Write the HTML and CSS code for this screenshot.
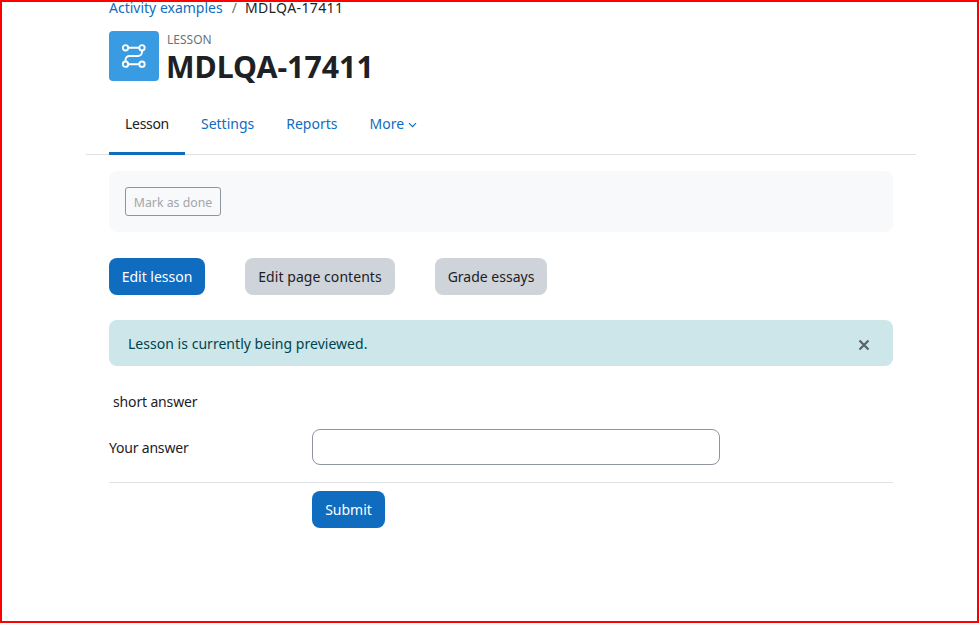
FILE: index.html
```html
<!DOCTYPE html>
<html lang="en">
<head>
<meta charset="utf-8">
<title>MDLQA-17411</title>
<link rel="stylesheet" href="styles.css">
</head>
<body>
<div class="frame">
  <div class="wrap">
    <div class="inner">
      <nav class="crumbs"><a class="link">Activity examples</a><span class="sep">/</span><span class="current">MDLQA-17411</span></nav>
      <header class="head">
        <div class="icon">
          <svg width="24" height="24" viewBox="0 0 24 24" fill="none" stroke="#fff" stroke-width="1.9">
            <circle cx="3.5" cy="3.8" r="2.700"/>
            <circle cx="20" cy="3.8" r="2.700"/>
            <circle cx="3.5" cy="20.2" r="2.700"/>
            <circle cx="20" cy="20.2" r="2.700"/>
            <path d="M6.200 3.800H17.300M6.200 20.200H17.300M20 6.500V8a4 4 0 0 1-4 4H7.500a4 4 0 0 0-4 4v1.500"/>
          </svg>
        </div>
        <div class="titles">
          <div class="kicker">LESSON</div>
          <h1 class="title">MDLQA-17411</h1>
        </div>
      </header>
    </div>
    <div class="tabs">
      <a class="tab active">Lesson</a>
      <a class="tab">Settings</a>
      <a class="tab">Reports</a>
      <a class="tab more">More<svg class="chev" width="9" height="6" viewBox="0 0 9 6" fill="none" stroke="#0f6cbf" stroke-width="1.200"><path d="M1 1.200 4.500 4.700 8 1.200"/></svg></a>
    </div>
    <div class="inner">
      <div class="done-bar"><button class="done" type="button">Mark as done</button></div>
      <div class="actions">
        <button class="btn primary edit" type="button">Edit lesson</button>
        <button class="btn secondary pages" type="button">Edit page contents</button>
        <button class="btn secondary grade" type="button">Grade essays</button>
      </div>
      <div class="alert">
        <span class="alert-text">Lesson is currently being previewed.</span>
        <svg class="close" width="12" height="12" viewBox="0 0 12 12" stroke="#5b6166" stroke-width="2.200"><path d="M1.500 1.500l9 9M10.500 1.500l-9 9"/></svg>
      </div>
      <p class="question">short answer</p>
      <div class="row">
        <label class="label" for="a">Your answer</label>
        <input class="input" id="a" type="text">
      </div>
      <div class="submit-row"><button class="btn primary submit" type="button">Submit</button></div>
    </div>
  </div>
</div>
</body>
</html>
```
FILE: styles.css
```css
* { box-sizing: border-box; }
html, body { margin: 0; padding: 0; }
body { background: #fff; color: #1d2125; font-family: "Noto Sans", sans-serif; font-size: 14px; }
.frame { width: 979px; height: 623px; border: 2px solid #f00; overflow: hidden; }
.wrap { width: 830px; margin-left: 84px; }
.inner { padding: 0 23px; }
.crumbs { display: flex; height: 16px; line-height: 12px; align-items: center; font-size: 14px; margin-top: -2px; }
.link { color: #0f6cbf; }
.sep { color: #6a737b; margin: 0 8px 0 9px; }
.current { letter-spacing: .4px; }
.head { display: flex; margin-top: 15px; height: 50px; }
.icon { width: 50px; height: 50px; background: #399be2; border-radius: 4px; display: flex; align-items: center; justify-content: center; }
.titles { margin-left: 8px; }
.kicker { font-size: 12px; line-height: 14px; color: #6a737b; margin-top: 2px; }
.title { margin: 6px 0 0 -1px; font-size: 30.3px; line-height: 28px; font-weight: 700; color: #1d2125; }
.tabs { display: flex; height: 72px; margin-top: 2px; padding: 0 23px; border-bottom: 1px solid #dee2e6; }
.tab { display: flex; align-items: center; padding: 12px 16px 0; height: 72px; color: #0f6cbf; font-size: 14px; border-bottom: 3px solid transparent; }
.tab.active { color: #1d2125; border-bottom-color: #0f6cbf; letter-spacing: -.3px; }
.chev { margin-left: 4px; margin-top: 2px; }
.done-bar { margin-top: 16px; height: 61px; background: #f8f9fa; border-radius: 8px; padding: 16px; }
.done { display: block; height: 29px; width: 96px; padding: 1px 0 0; background: transparent; border: 1px solid #8f959e; border-radius: 3px; color: #a3a7ab; font: 12.3px "Noto Sans", sans-serif; }
.actions { display: flex; gap: 40px; margin-top: 26px; }
.btn { height: 37px; padding: 0; border: 0; border-radius: 8px; font: 14px "Noto Sans", sans-serif; }
.edit { width: 96px; }
.pages { width: 150px; letter-spacing: .05px; }
.grade { width: 112px; }
.submit { width: 73px; }
.primary { background: #0f6cbf; color: #fff; }
.secondary { background: #ced4da; color: #1d2125; }
.alert { display: flex; justify-content: space-between; align-items: center; margin-top: 25px; height: 46px; padding: 0 23px 0 19px; background: #cce6ea; border-radius: 8px; color: #00434e; }
.alert-text { letter-spacing: .03px; }
.close { margin-top: 3px; }
.question { margin: 26px 0 0 4px; line-height: 19px; letter-spacing: -.15px; }
.row { display: flex; align-items: center; margin-top: 18px; padding-bottom: 17px; border-bottom: 1px solid #dee2e6; }
.label { width: 203px; letter-spacing: -.2px; }
.input { width: 408px; height: 36px; border: 1px solid #8f959e; border-radius: 8px; background: #fff; }
.submit-row { margin-top: 8px; padding-left: 203px; }
```
